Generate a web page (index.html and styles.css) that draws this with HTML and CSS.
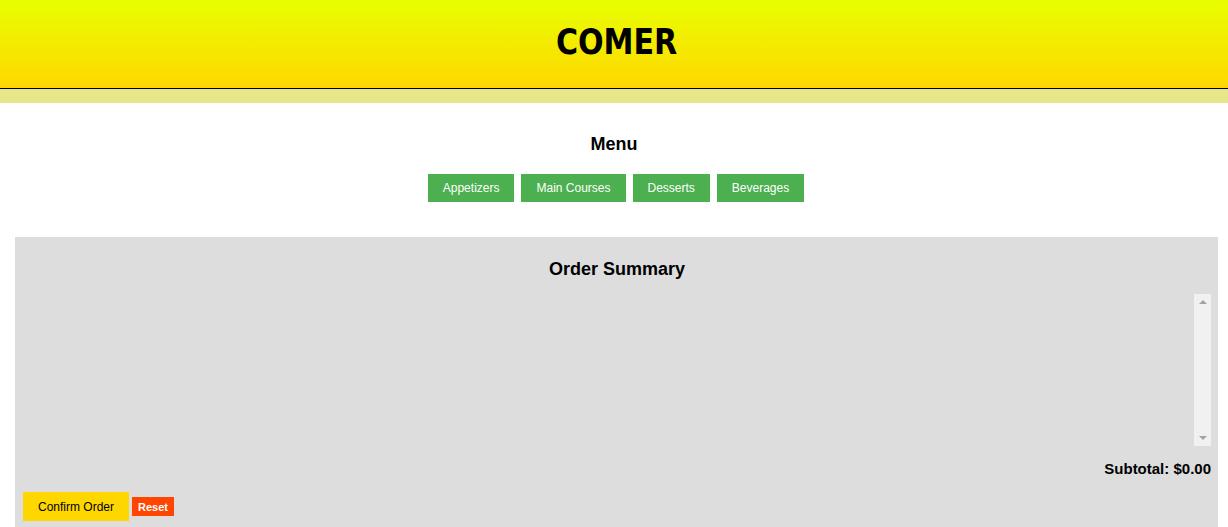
FILE: index.html
```html
<!DOCTYPE html>
<html>
<head>
<meta charset="utf-8">
<link rel="stylesheet" href="styles.css">
</head>
<body>
<header class="top">
  <h1 class="brand">COMER</h1>
</header>
<div class="band"></div>
<section class="menu">
  <h3 class="menu-title">Menu</h3>
  <div class="cats">
    <button class="cat">Appetizers</button>
    <button class="cat">Main Courses</button>
    <button class="cat">Desserts</button>
    <button class="cat">Beverages</button>
  </div>
</section>
<section class="order">
  <h3 class="order-title">Order Summary</h3>
  <div class="items">
    <div class="list"></div>
    <div class="scrollbar">
      <span class="arrow up"></span>
      <span class="arrow down"></span>
    </div>
  </div>
  <div class="subtotal">Subtotal: $0.00</div>
  <div class="actions">
    <button class="confirm">Confirm Order</button>
    <button class="reset">Reset</button>
  </div>
</section>
</body>
</html>
```
FILE: styles.css
```css
html, body {
  margin: 0;
  padding: 0;
  background: #fff;
  font-family: "Liberation Sans", Arial, sans-serif;
}
.top {
  height: 88px;
  background: linear-gradient(to bottom, #e8ff00, #ffd700);
  border-bottom: 1px solid #000;
  display: flex;
  align-items: center;
  justify-content: center;
}
.brand {
  margin: 0 0 4px 6px;
  font-family: "DejaVu Sans", sans-serif;
  font-weight: bold;
  font-size: 35px;
  color: #000;
  transform: scaleX(0.86);
}
.band {
  height: 14px;
  background: #e8e68a;
}
.menu {
  text-align: center;
  padding-top: 31px;
}
.menu-title {
  margin: 0;
  font-size: 18px;
  line-height: 21px;
  font-weight: bold;
}
.cats {
  margin-top: 19px;
  margin-left: 4px;
  display: flex;
  justify-content: center;
  gap: 7px;
}
.cat {
  background: #4caf50;
  color: #fff;
  border: none;
  height: 28px;
  padding: 0 15px;
  font-family: "Liberation Sans", Arial, sans-serif;
  font-size: 12px;
}
.order {
  margin: 35px 10px 0 15px;
  background: #ddd;
  padding: 22px 7px 6px 8px;
}
.order-title {
  margin: 0;
  text-align: center;
  font-size: 18px;
  line-height: 21px;
}
.items {
  margin-top: 14px;
  height: 152px;
  display: flex;
}
.list {
  flex: 1;
}
.scrollbar {
  width: 17px;
  background: #f1f1f1;
  display: flex;
  flex-direction: column;
  justify-content: space-between;
  align-items: center;
  padding: 6px 0;
  box-sizing: border-box;
}
.arrow {
  width: 0;
  height: 0;
  border-left: 4px solid transparent;
  border-right: 4px solid transparent;
}
.arrow.up {
  border-bottom: 4px solid #a3a3a3;
}
.arrow.down {
  border-top: 4px solid #a3a3a3;
}
.subtotal {
  margin-top: 14px;
  text-align: right;
  font-weight: bold;
  font-size: 15px;
  line-height: 17px;
}
.actions {
  margin-top: 15px;
  display: flex;
  align-items: center;
  gap: 3px;
}
.confirm {
  background: #ffd700;
  border: none;
  height: 29px;
  width: 106px;
  font-family: "Liberation Sans", Arial, sans-serif;
  font-size: 12px;
  color: #000;
}
.reset {
  background: #ff4500;
  border: none;
  height: 19px;
  width: 42px;
  padding: 0;
  color: #fff;
  font-weight: bold;
  font-family: "Liberation Sans", Arial, sans-serif;
  font-size: 11px;
}
```
